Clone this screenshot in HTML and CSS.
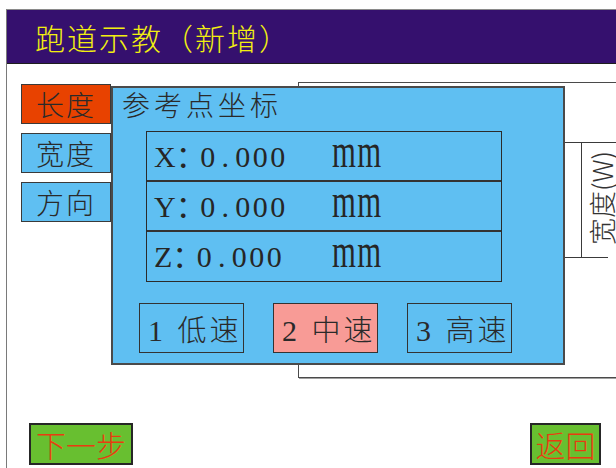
FILE: index.html
```html
<!DOCTYPE html>
<html lang="zh">
<head>
<meta charset="utf-8">
<title>跑道示教（新增）</title>
<link rel="stylesheet" href="styles.css">
</head>
<body>
<div class="screen">
  <header class="header"><h1 class="title">跑道示教（新增）</h1></header>
  <main class="body">
    <div class="content">
      <nav class="menu">
        <div class="tab tab-active">长度</div>
        <div class="tab">宽度</div>
        <div class="tab">方向</div>
      </nav>
      <div class="diagram">
        <div class="dim dim-top"></div>
        <div class="dim dim-vert"></div>
        <div class="dim dim-bottom"></div>
        <span class="dim-label">宽度(W)</span>
      </div>
    </div>
    <footer class="footer">
      <button class="btn">下一步</button>
      <button class="btn">返回</button>
    </footer>
    <section class="dialog">
      <h2 class="dialog-title">参考点坐标</h2>
      <div class="coords">
        <div class="row"><span class="lbl"><span class="axis">X</span><span class="colon">：</span>0<span class="dot">.</span>000</span><span class="unit">mm</span></div>
        <div class="row"><span class="lbl"><span class="axis">Y</span><span class="colon">：</span>0<span class="dot">.</span>000</span><span class="unit">mm</span></div>
        <div class="row"><span class="lbl"><span class="axis">Z</span><span class="colon">：</span>0<span class="dot">.</span>000</span><span class="unit">mm</span></div>
      </div>
      <div class="speeds">
        <div class="speed"><span class="n">1</span> 低速</div>
        <div class="speed speed-on"><span class="n">2</span> 中速</div>
        <div class="speed"><span class="n">3</span> 高速</div>
      </div>
    </section>
  </main>
</div>
</body>
</html>
```

FILE: styles.css
```css
html, body {
  margin: 0;
  padding: 0;
  background: #ffffff;
  overflow: hidden;
  width: 616px;
  height: 468px;
}

.screen {
  margin: 9px 0 0 6px;
  width: 610px;
  height: 459px;
  border-left: 1px solid #7a7a7a;
  border-top: 1px solid #8a8a8a;
  box-sizing: border-box;
  overflow: hidden;
  font-family: "Noto Sans CJK SC", sans-serif;
  color: #2a2a2a;
}

.header {
  height: 54px;
  background: #35106e;
  border-bottom: 1px solid #1e1e1e;
  box-sizing: border-box;
  display: flex;
  align-items: center;
}

.title {
  margin: 0 0 0 28px;
  font-size: 30px;
  line-height: 30px;
  letter-spacing: 2px;
  font-weight: 300;
  color: #f2ef10;
}

.body {
  position: relative;
  height: 404px;
  display: flex;
  flex-direction: column;
}

.content {
  height: 359px;
  display: flex;
  align-items: flex-start;
}

.menu {
  margin: 20px 0 0 14px;
  width: 90px;
  flex-shrink: 0;
  display: flex;
  flex-direction: column;
  gap: 9px;
}

.tab {
  height: 40px;
  box-sizing: border-box;
  border: 1px solid #3a3a3a;
  background: #5fbff2;
  font-size: 28px;
  line-height: 38px;
  letter-spacing: 2px;
  text-align: center;
  font-weight: 300;
}

.tab-active {
  background: #e84200;
}

.diagram {
  position: relative;
  margin: 18px 0 0 187px;
  width: 330px;
  height: 296px;
  flex-shrink: 0;
  box-sizing: border-box;
  border: 1px solid #4a4a4a;
  box-shadow: 1px 1px 0 #a0a0a0;
}

.dim {
  position: absolute;
  border-color: #3a3a3a;
  border-style: solid;
  border-width: 0;
}

.dim-top {
  top: 59px;
  left: 230px;
  width: 100px;
  border-top-width: 1px;
}

.dim-vert {
  top: 59px;
  left: 282px;
  height: 115px;
  border-left-width: 1px;
}

.dim-bottom {
  top: 174px;
  left: 230px;
  width: 79px;
  border-top-width: 1px;
}

.dim-label {
  position: absolute;
  left: 248px;
  top: 100px;
  width: 110px;
  height: 30px;
  line-height: 30px;
  text-align: center;
  font-size: 27px;
  font-weight: 300;
  color: #333;
  transform: rotate(-90deg);
  white-space: nowrap;
}

.footer {
  height: 45px;
  box-sizing: border-box;
  padding: 0 15px 3px 22px;
  display: flex;
  justify-content: space-between;
  align-items: flex-start;
}

.btn {
  height: 42px;
  padding: 0 3px;
  margin: 0;
  border: 2px solid #262626;
  background: #68bf30;
  color: #e83c10;
  font-family: "Noto Sans CJK SC", sans-serif;
  font-size: 30px;
  line-height: 38px;
  font-weight: 300;
}

.btn:first-child {
  width: 104px;
}

.btn:last-child {
  width: 71px;
}

.dialog {
  position: absolute;
  left: 104px;
  top: 22px;
  width: 454px;
  height: 279px;
  box-sizing: border-box;
  border: 2px solid #4a4a4a;
  background: #5fbff2;
}

.dialog-title {
  margin: 2px 0 0 9px;
  font-size: 28px;
  line-height: 28px;
  letter-spacing: 4px;
  font-weight: 300;
  color: #2a2a2a;
}

.coords {
  margin: 13px 0 0 33px;
  width: 356px;
  box-sizing: border-box;
  border: 1px solid #2b2b2b;
}

.row {
  height: 50px;
  box-sizing: border-box;
  border-bottom: 2px solid #333;
  padding: 2px 0 0 7px;
  line-height: 46px;
  font-family: "Liberation Serif", "Noto Sans CJK SC", serif;
  font-size: 30px;
  letter-spacing: 2.5px;
  white-space: nowrap;
  color: #262626;
}

.row:last-child {
  height: 49px;
  border-bottom: 0;
}

.lbl {
  display: inline-block;
  width: 178px;
}

.axis {
  letter-spacing: 0;
}

.colon {
  letter-spacing: -5.5px;
}

.dot {
  padding: 0 3.75px;
}

.unit {
  display: inline-block;
  font-family: "Liberation Serif", serif;
  font-size: 48px;
  line-height: 20px;
  letter-spacing: 2px;
  transform: scaleX(0.64);
  transform-origin: left center;
}

.speeds {
  margin: 21px 0 0 26px;
  display: flex;
  gap: 29px;
}

.speed {
  width: 105px;
  height: 50px;
  box-sizing: border-box;
  border: 1px solid #333;
  padding-left: 8px;
  font-size: 29px;
  line-height: 48px;
  letter-spacing: 3px;
  font-weight: 300;
  color: #2a2a2a;
  white-space: nowrap;
}

.speed .n {
  font-family: "Liberation Serif", serif;
  font-size: 30px;
  letter-spacing: 0;
  margin-right: 5px;
}

.speed-on {
  background: #f89b96;
}
```
